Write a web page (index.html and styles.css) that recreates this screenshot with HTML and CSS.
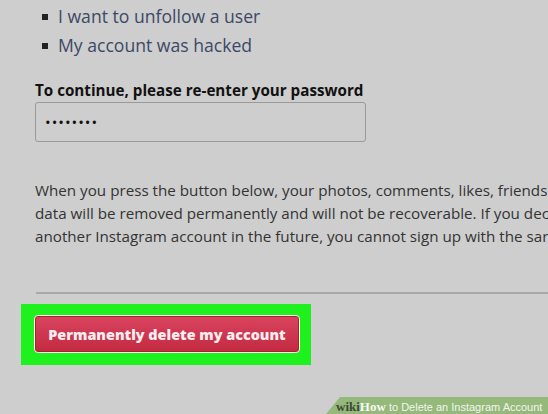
FILE: index.html
```html
<!DOCTYPE html>
<html>
<head>
<meta charset="utf-8">
<link rel="stylesheet" href="styles.css">
</head>
<body>
<div class="content">
  <ul class="reasons">
    <li>I want to unfollow a user</li>
    <li>My account was hacked</li>
  </ul>
  <label class="pw-label">To continue, please re-enter your password</label>
  <div class="pw-input">••••••••</div>
  <p class="notice">When you press the button below, your photos, comments, likes, friends<br>data will be removed permanently and will not be recoverable. If you dec<br>another Instagram account in the future, you cannot sign up with the sar</p>
  <hr class="rule">
  <div class="highlight">
    <button class="delete-btn">Permanently delete my account</button>
  </div>
</div>
<div class="wh-banner"><span class="wh-wiki">wiki</span><span class="wh-how">How</span> to Delete an Instagram Account</div>
</body>
</html>
```
FILE: styles.css
```css
html, body {
  margin: 0;
  padding: 0;
  width: 548px;
  height: 414px;
  overflow: hidden;
  background: #cecece;
}
body {
  position: relative;
  font-family: "Open Sans", "Noto Sans", sans-serif;
  color: #333;
}
.content {
  padding-left: 35px;
}
.reasons {
  list-style: none;
  margin: 2px 0 0 0;
  padding: 0;
}
.reasons li {
  position: relative;
  height: 29px;
  line-height: 29px;
  padding-left: 23px;
  font-size: 17.6px;
  color: #3c4866;
  white-space: nowrap;
}
.reasons li::before {
  content: "";
  position: absolute;
  left: 7px;
  top: 12px;
  width: 6px;
  height: 6px;
  background: #222;
}
.pw-label {
  display: block;
  margin-top: 20px;
  line-height: 20px;
  font-size: 15.2px;
  font-weight: 700;
  color: #111;
  white-space: nowrap;
}
.pw-input {
  box-sizing: border-box;
  margin-top: 2px;
  width: 331px;
  height: 40px;
  border: 1px solid #9a9a9a;
  border-radius: 3px;
  padding-left: 9px;
  line-height: 38px;
  font-size: 15px;
  letter-spacing: 1px;
  color: #111;
}
.notice {
  margin: 37px 0 0 0;
  font-size: 15.2px;
  line-height: 23px;
  color: #333;
  white-space: nowrap;
  overflow: hidden;
}
.rule {
  margin: 44px 0 0 1px;
  border: 0;
  border-top: 2px solid #a8a8a8;
  height: 0;
}
.highlight {
  display: inline-block;
  margin: 10px 0 0 -14px;
  padding: 11px 11px 12px 13px;
  background: #1ef11e;
}
.delete-btn {
  display: block;
  box-sizing: border-box;
  width: 266px;
  height: 38px;
  border: 1px solid #f4f4f0;
  outline: none;
  border-radius: 4px;
  background: linear-gradient(#d94460, #c22a40);
  box-shadow: inset 0 0 0 1px #a82035;
  font-family: "Open Sans", "Noto Sans", sans-serif;
  font-size: 14.4px;
  font-weight: 800;
  color: #fbeef0;
  padding: 0;
}
.wh-banner {
  position: absolute;
  right: 0;
  bottom: 0;
  width: 212px;
  height: 17px;
  padding-left: 10px;
  background: #95b87b;
  clip-path: polygon(14px 0, 100% 0, 100% 100%, 0 100%);
  font-family: "Liberation Sans", sans-serif;
  font-size: 11px;
  line-height: 19px;
  color: #f2f6ee;
  white-space: nowrap;
}
.wh-wiki {
  font-family: "Liberation Serif", serif;
  font-weight: 700;
  font-size: 13px;
  color: #3c4a34;
}
.wh-how {
  font-family: "Liberation Serif", serif;
  font-weight: 700;
  font-size: 13px;
  color: #f7faf3;
}
```
